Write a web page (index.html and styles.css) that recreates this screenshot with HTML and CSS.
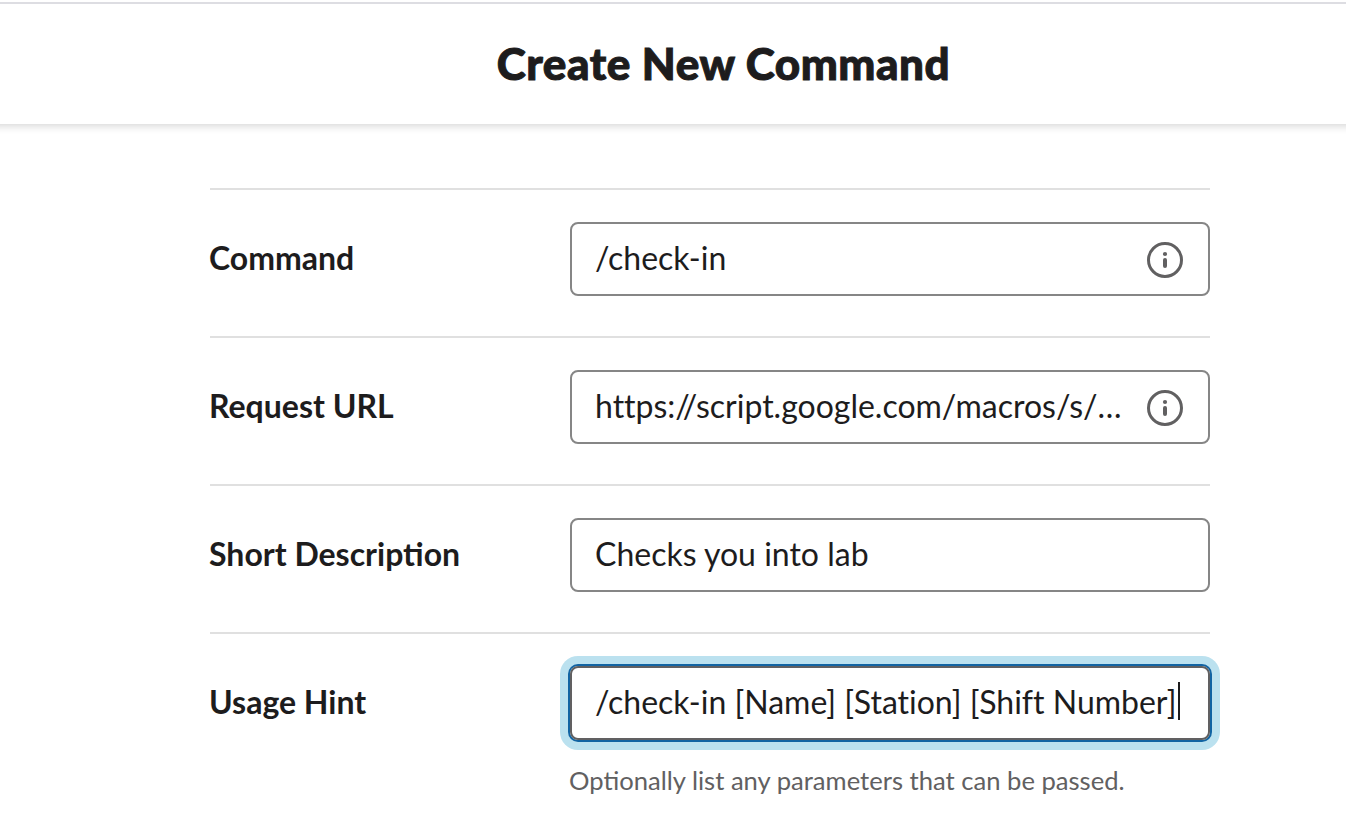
FILE: index.html
```html
<!DOCTYPE html>
<html lang="en">
<head>
<meta charset="utf-8">
<title>Create New Command</title>
<link rel="stylesheet" href="styles.css">
</head>
<body>
<header class="header"><h1 class="title">Create New Command</h1></header>
<main class="form">
  <div class="row">
    <div class="label">Command</div>
    <div class="field">
      <div class="input"><span class="value">/check-in</span>
        <svg class="info" viewBox="0 0 36 36"><circle cx="18" cy="18" r="16.5"/><circle class="dot" cx="18" cy="12" r="2.1"/><path d="M18 18v6"/></svg>
      </div>
    </div>
  </div>
  <div class="row">
    <div class="label">Request URL</div>
    <div class="field">
      <div class="input"><span class="value">https://script.google.com/macros/s/…</span>
        <svg class="info" viewBox="0 0 36 36"><circle cx="18" cy="18" r="16.5"/><circle class="dot" cx="18" cy="12" r="2.1"/><path d="M18 18v6"/></svg>
      </div>
    </div>
  </div>
  <div class="row">
    <div class="label">Short Description</div>
    <div class="field"><div class="input"><span class="value">Checks you into lab</span></div></div>
  </div>
  <div class="row">
    <div class="label">Usage Hint</div>
    <div class="field">
      <div class="input focused"><span class="value">/check-in [Name] [Station] [Shift Number]</span><span class="caret"></span></div>
      <p class="hint">Optionally list any parameters that can be passed.</p>
    </div>
  </div>
</main>
</body>
</html>
```
FILE: styles.css
```css
* { box-sizing: border-box; }
body {
  margin: 0;
  height: 836px;
  overflow: hidden;
  background: #fff;
  color: #1d1c1d;
  font-family: Lato, "Liberation Sans", sans-serif;
}
.header {
  height: 122px;
  margin: 2px -12px 0;
  border-top: 2px solid #dddde2;
  box-shadow: 0 2px 8px rgba(0, 0, 0, 0.17);
  clip-path: inset(0 0 -20px 0);
}
.title {
  margin: 0;
  padding-left: 101px;
  text-align: center;
  font-size: 44px;
  font-weight: 900;
  letter-spacing: 0.54px;
  line-height: 118px;
  -webkit-text-stroke: 1px #1d1c1d;
}
.form { width: 1000px; margin: 64px 0 0 210px; }
.row {
  display: flex;
  height: 148px;
  padding-top: 32px;
  border-top: 2px solid #e0e0e0;
}
.label {
  width: 360px;
  margin-left: -1px;
  margin-right: 1px;
  font-size: 32px;
  font-weight: 700;
  line-height: 72px;
  white-space: nowrap;
}
.field { width: 640px; }
.input {
  display: flex;
  align-items: center;
  height: 74px;
  padding: 0 25px 0 23px;
  border: 2px solid #868686;
  border-radius: 8px;
  font-size: 32px;
  line-height: 68px;
  white-space: nowrap;
}
.value { padding-bottom: 2px; font-variant-ligatures: none; }
.info {
  width: 36px;
  height: 36px;
  margin: 2px 0 0 auto;
  fill: none;
  stroke: #616061;
  stroke-width: 3;
}
.info path { stroke-width: 4; stroke-linecap: round; }
.info .dot { fill: #616061; stroke: none; }
.focused {
  border-color: #616061;
  box-shadow: 0 0 0 2px #1264a3, 0 0 0 10px #bbe1ef;
}
.caret { width: 2px; height: 38px; margin: 0 0 4px 2px; background: #1d1c1d; }
.hint {
  margin: 22px 0 0 -1px;
  color: #616061;
  font-size: 25.6px;
  line-height: 36px;
  white-space: nowrap;
}
```
